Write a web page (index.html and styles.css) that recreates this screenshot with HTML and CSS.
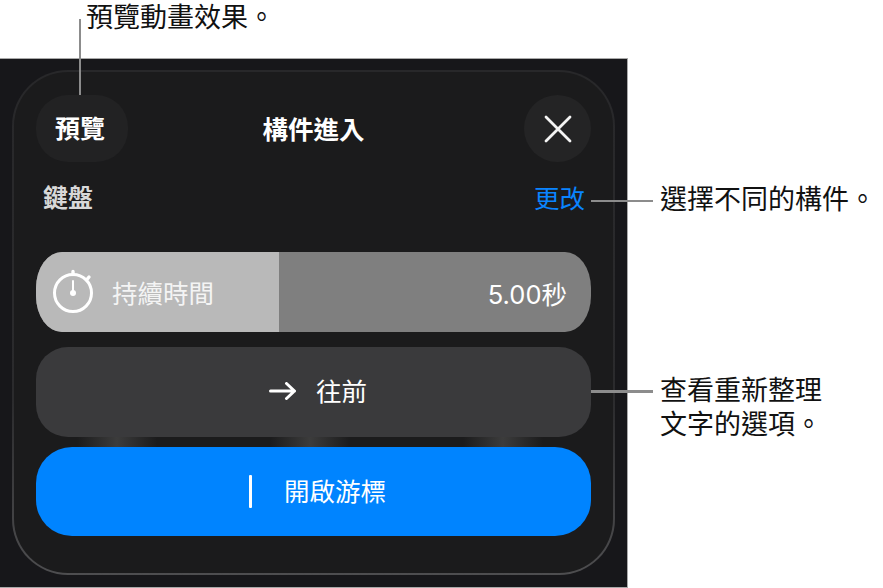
FILE: index.html
```html
<!DOCTYPE html>
<html lang="zh-Hant">
<head>
    <meta charset="UTF-8">
    <title>構件進入</title>
    <link rel="stylesheet" href="styles.css">
</head>
<body>
    <div class="page">
        <div class="screen">
            <div class="panel">
                <div class="topbar">
                    <div class="pill-btn">預覽</div>
                    <div class="title">構件進入</div>
                    <div class="close-btn">
                        <svg width="28" height="28" viewBox="0 0 28 28"><path d="M2 2 L26 26 M26 2 L2 26" stroke="#f4f4f4" stroke-width="2.8" stroke-linecap="round"/></svg>
                    </div>
                </div>
                <div class="part-row">
                    <span class="part-name">鍵盤</span>
                    <span class="part-change">更改</span>
                </div>
                <div class="slider">
                    <div class="slider-fill">
                        <svg class="timer" width="42" height="44" viewBox="0 0 42 44">
                            <circle cx="21" cy="24" r="18.5" fill="none" stroke="#fff" stroke-width="3"/>
                            <path d="M21 5.5 V2.5 M34.5 11 L37 8" stroke="#fff" stroke-width="3.4" stroke-linecap="round"/>
                            <path d="M21 12 V24" stroke="#fff" stroke-width="2" stroke-linecap="round"/>
                            <circle cx="21" cy="24" r="3" fill="#fff"/>
                        </svg>
                        <span>持續時間</span>
                    </div>
                    <div class="slider-value">5.00秒</div>
                </div>
                <div class="dir-btn">
                    <svg width="27" height="18" viewBox="0 0 27 18"><path d="M1.5 9 H25.5 M17.5 1.5 L25.5 9 L17.5 16.5" fill="none" stroke="#fff" stroke-width="3" stroke-linecap="round" stroke-linejoin="round"/></svg>
                    <span>往前</span>
                </div>
                <div class="glow-row">
                    <i></i><i></i><i></i>
                </div>
                <div class="cursor-btn">
                    <b class="caret"></b>
                    <span>開啟游標</span>
                </div>
            </div>
        </div>

        <div class="note note-top">預覽動畫效果。</div>
        <div class="note note-part">選擇不同的構件。</div>
        <div class="note note-dir">查看重新整理<br>文字的選項。</div>
        <div class="line line-top"></div>
        <div class="line line-part"></div>
        <div class="line line-dir"></div>
    </div>
</body>
</html>
```

FILE: styles.css
```css
html, body {
    margin: 0;
    background-color: #fff;
}
.page {
    position: relative;
    width: 883px;
    height: 588px;
    overflow: hidden;
    font-family: "Noto Sans CJK TC", "Noto Sans", sans-serif;
}
.screen {
    box-sizing: border-box;
    width: 628px;
    height: 530px;
    margin-top: 58px;
    padding: 11px 12px;
    background-color: #17171a;
    border: 1px solid #a9a9a9;
    border-left: none;
}
.panel {
    box-sizing: border-box;
    height: 505px;
    width: 603px;
    padding: 23px 22px 0 22px;
    background: linear-gradient(#1b1b1c, #1b1b1c) padding-box,
        linear-gradient(#28282a 0%, #2b2b2d 65%, #4e4e50 100%) border-box;
    border: 2px solid transparent;
    border-radius: 56px;
    color: #fff;
}
.topbar {
    display: grid;
    grid-template-columns: 1fr auto 1fr;
    align-items: center;
    height: 67px;
}
.pill-btn {
    box-sizing: border-box;
    width: 92px;
    height: 67px;
    line-height: 65px;
    padding-right: 4px;
    text-align: center;
    background-color: #222223;
    border-radius: 32px;
    font-size: 25px;
    font-weight: 700;
}
.title {
    margin-bottom: 3px;
    font-size: 25.5px;
    font-weight: 700;
}
.close-btn {
    display: flex;
    justify-content: center;
    align-items: center;
    justify-self: end;
    width: 67px;
    height: 67px;
    background-color: #242425;
    border-radius: 50%;
}
.part-row {
    display: flex;
    justify-content: space-between;
    align-items: center;
    height: 36px;
    margin-top: 16px;
    padding: 0 6px 0 7px;
    font-size: 25.5px;
}
.part-name {
    font-weight: 700;
    font-size: 25px;
    color: #d8d8d8;
}
.part-change {
    color: #0a84ff;
}
.slider {
    display: flex;
    height: 80px;
    margin-top: 38px;
    background-color: #7f7f7f;
    border-radius: 26px / 36px;
    overflow: hidden;
}
.slider-fill {
    display: flex;
    align-items: center;
    gap: 18px;
    box-sizing: border-box;
    width: 243px;
    padding-left: 16px;
    background-color: #b9b9b9;
    font-size: 25.5px;
    color: #f4f4f4;
}
.slider-fill span {
    margin-bottom: 2px;
}
.timer {
    margin-top: -2px;
}
.slider-value {
    flex: 1;
    align-self: center;
    padding-right: 24px;
    text-align: right;
    font-family: Inter, "Noto Sans CJK TC", sans-serif;
    font-size: 25.5px;
}
.dir-btn {
    display: flex;
    justify-content: center;
    align-items: center;
    gap: 20px;
    box-sizing: border-box;
    height: 90px;
    margin-top: 15px;
    padding: 0 0 2px 9px;
    background-color: #3a3a3c;
    border-radius: 32px;
    font-size: 25.5px;
}
.dir-btn span {
    margin-bottom: 4px;
}
.glow-row {
    display: flex;
    justify-content: space-between;
    height: 10px;
    padding: 0 48px 0 41px;
}
.glow-row i {
    width: 80px;
    height: 10px;
    background: linear-gradient(90deg, #1b1b1c 0%, #3c3c3c 50%, #1b1b1c 100%);
}
.cursor-btn {
    display: flex;
    justify-content: center;
    align-items: center;
    gap: 32px;
    height: 89px;
    padding-left: 8px;
    background-color: #0084ff;
    border-radius: 36px;
    font-size: 25.5px;
}
.cursor-btn span {
    margin-bottom: 5px;
}
.caret {
    width: 3px;
    height: 33px;
    background-color: #fff;
    border-radius: 1px;
}
.note {
    position: absolute;
    font-size: 27px;
    line-height: 34px;
    color: #111;
    white-space: nowrap;
}
.note-top {
    left: 86px;
    top: 2px;
    line-height: 28px;
}
.note-part {
    left: 660px;
    top: 181px;
}
.note-dir {
    left: 660px;
    top: 372px;
}
.line {
    position: absolute;
    background-color: #8c8c8c;
}
.line-top {
    left: 78.5px;
    top: 19px;
    width: 2.5px;
    height: 76px;
}
.line-part {
    left: 591px;
    top: 199.5px;
    width: 62px;
    height: 2.5px;
}
.line-dir {
    left: 591px;
    top: 390px;
    width: 62px;
    height: 2.5px;
}
```
